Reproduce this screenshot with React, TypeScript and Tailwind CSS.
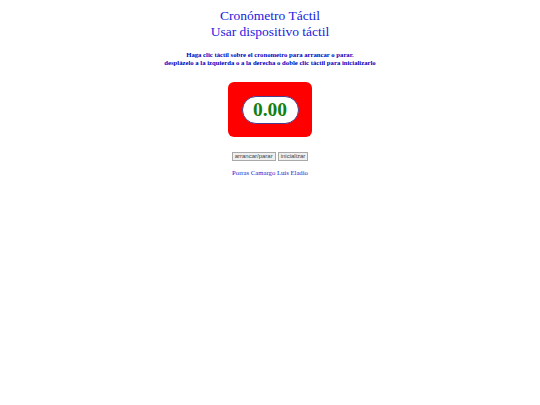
import { useState, useRef } from "react";

export default function App() {
  const [elapsed, setElapsed] = useState(0);
  const [running, setRunning] = useState(false);
  const timer = useRef<number | null>(null);

  const toggle = () => {
    if (running) {
      if (timer.current) window.clearInterval(timer.current);
      timer.current = null;
      setRunning(false);
      return;
    }
    const start = Date.now() - elapsed * 1000;
    timer.current = window.setInterval(() => {
      setElapsed((Date.now() - start) / 1000);
    }, 10);
    setRunning(true);
  };

  const reset = () => {
    if (timer.current) window.clearInterval(timer.current);
    timer.current = null;
    setRunning(false);
    setElapsed(0);
  };

  return (
    <div className="flex min-h-[405px] w-full flex-col items-center bg-white pt-[8px] font-['Liberation_Serif',serif]">
      <h1 className="text-center text-[13.5px] leading-[16px] font-normal text-[#2020e0]">
        Cronómetro Táctil
        <br />
        Usar dispositivo táctil
      </h1>
      <p className="mt-[11px] text-center text-[6.7px] leading-[8px] font-bold text-[#0000c0]">
        Haga clic táctil sobre el cronometro para arrancar o parar.
        <br />
        desplázelo a la izquierda o a la derecha o doble clic táctil para inicializarlo
      </p>
      <div
        onClick={toggle}
        onDoubleClick={reset}
        className="mt-[15px] flex h-[55px] w-[84px] cursor-pointer items-center justify-center rounded-[6px] bg-[#ff0000]"
      >
        <div className="flex h-[28px] w-[57px] items-center justify-center rounded-full border border-[#4b3c8c] bg-white">
          <span className="text-[19.5px] leading-none font-bold text-[#108010]">
            {elapsed.toFixed(2)}
          </span>
        </div>
      </div>
      <div className="mt-[15px] flex gap-[2px] font-['Liberation_Sans',sans-serif]">
        <button
          onClick={toggle}
          className="h-[9px] border border-[#a8a8a8] bg-[#efefef] px-[2px] text-[6px] leading-[7px] text-[#444]"
        >
          arrancar/parar
        </button>
        <button
          onClick={reset}
          className="h-[9px] border border-[#a8a8a8] bg-[#efefef] px-[2px] text-[6px] leading-[7px] text-[#444]"
        >
          inicializar
        </button>
      </div>
      <a href="#" className="mt-[8px] text-[6.7px] leading-[8px] text-[#2424d0]">
        Porras Camargo Luis Eladio
      </a>
    </div>
  );
}
